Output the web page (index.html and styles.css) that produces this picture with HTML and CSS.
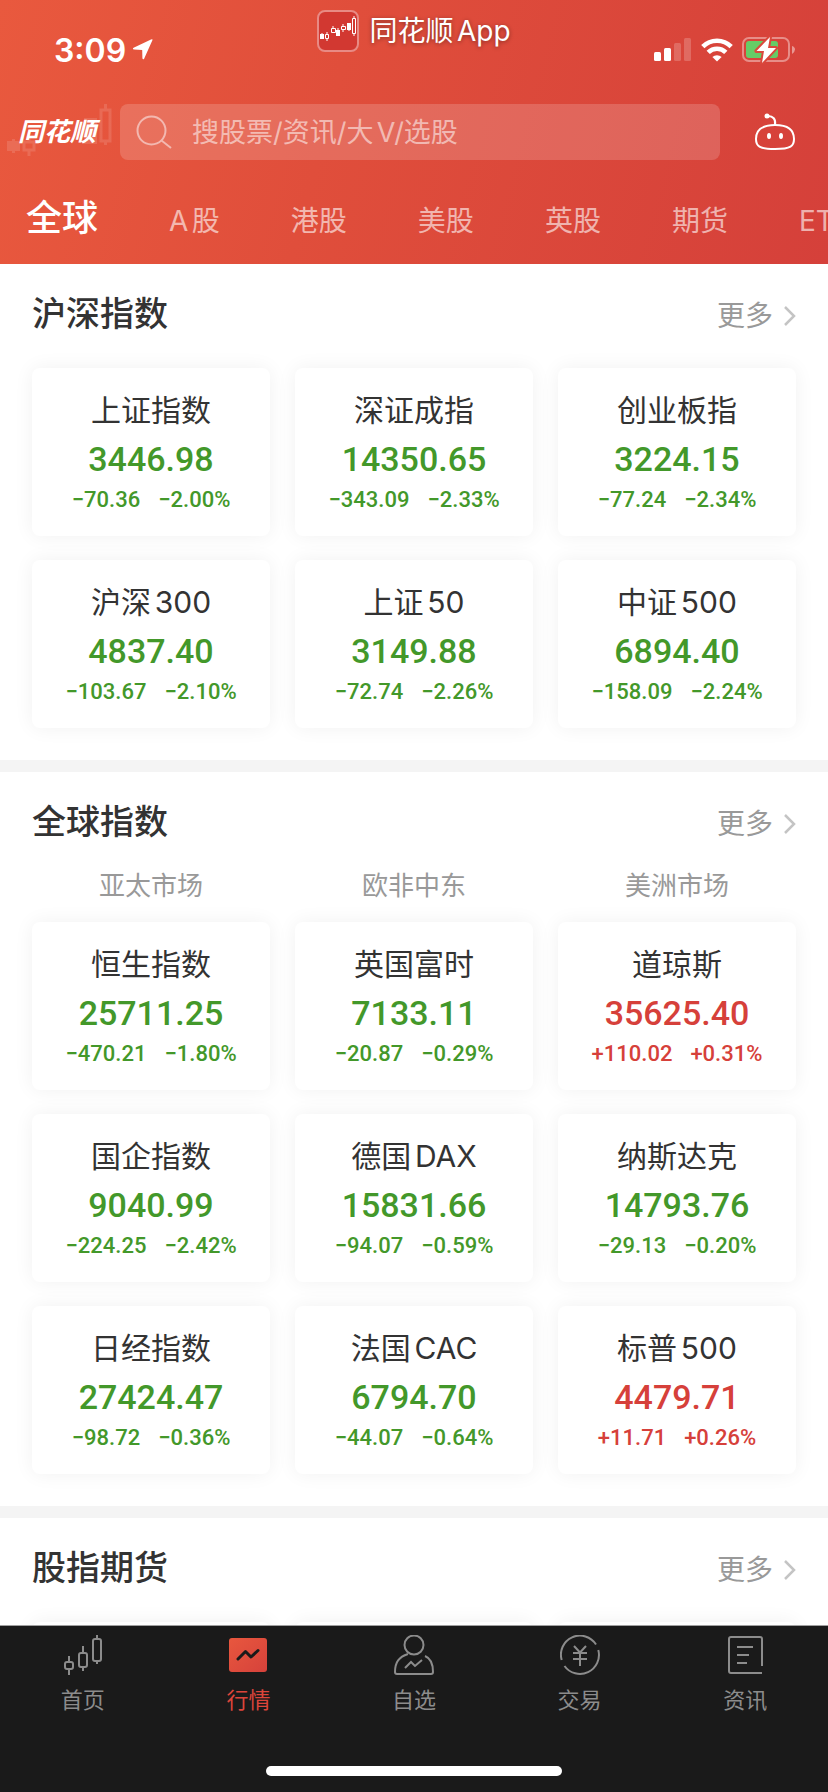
FILE: index.html
```html
<!DOCTYPE html>
<html lang="zh-CN">
  <head>
    <meta charset="utf-8">
    <meta name="viewport" content="width=device-width, initial-scale=1">
    <title>同花顺 - 行情</title>
    <link rel="stylesheet" href="styles.css">
  </head>

  <body>
    <header class="header">
      <div class="status-bar">
        <div class="status-time">
          3:09
          <svg width="22" height="22" viewBox="0 0 22 22"><path d="M20.5 1 L12 20 Q10.6 21 10.4 19 L10.2 11 L2 10.6 Q0 10 1.6 8.8 L19 0.4 Q21 0 20.5 1Z" fill="#fff"/></svg>
        </div>
        <div class="status-icons">
          <svg width="38" height="24" viewBox="0 0 38 24" fill="#fff">
            <rect x="0" y="14" width="7" height="9" rx="1.5"/>
            <rect x="10" y="10" width="7" height="13" rx="1.5"/>
            <rect x="20" y="5" width="7" height="18" rx="1.5" opacity=".2"/>
            <rect x="30" y="0" width="7" height="23" rx="1.5" opacity=".2"/>
          </svg>
          <svg width="32" height="24" viewBox="0 0 32 24" fill="none" stroke="#fff" stroke-width="4.6">
            <path d="M1.8 8.6 A20 20 0 0 1 30.2 8.6"/>
            <path d="M7.2 14.4 A12.4 12.4 0 0 1 24.8 14.4"/>
            <path d="M16 23.6 L11.4 19 A6.6 6.6 0 0 1 20.6 19Z" fill="#fff" stroke="none"/>
          </svg>
          <svg width="54" height="28" viewBox="0 0 54 28">
            <rect x="1" y="2" width="46" height="23" rx="6" fill="none" stroke="#fff" stroke-width="2" opacity=".4"/>
            <rect x="4" y="5" width="32" height="17" rx="3" fill="#66cc66"/>
            <path d="M50 10 Q53 11 53 13.5 Q53 16 50 18Z" fill="#fff" opacity=".45"/>
            <path d="M28 1 L14.5 15 H22 L20 27 L34 12 H26Z" fill="#fff" stroke="#da483c" stroke-width="4" stroke-linejoin="round"/>
            <path d="M28 1 L14.5 15 H22 L20 27 L34 12 H26Z" fill="#fff"/>
          </svg>
        </div>
        <div class="app-banner">
          <svg width="42" height="42" viewBox="0 0 42 42">
            <rect x="1" y="1" width="40" height="40" rx="7" fill="#d23831" stroke="#e88a84" stroke-width="2"/>
            <g fill="#fff" stroke="#fff">
              <path d="M3 24h4v5H3zM19 20h4v6h-4zM30 13h4v7h-4zM4.500 23h1v1h-1zM20.500 18h1v2h-1zM31.500 20h1v1h-1z" stroke="none"/>
              <path d="M10 22v2M10 29v2M16 16v2M26 14v2M26 20v2M37 6v2M37 24v2"/>
              <path d="M8.500 24.500h3v4h-3zM14.500 18.500h4v4h-4zM24.500 16.500h4v3h-4zM35.500 8.500h3v15h-3z" fill="none"/>
            </g>
          </svg>
          <span>同花顺App</span>
        </div>
      </div>

      <div class="search-row">
        <a class="logo" href="#">
          <svg class="logo-bars" width="112" height="56" viewBox="0 0 112 56">
            <path d="M7 37h13v10H7zM12 35h3v14h-3zM84 14h13v26H84z" fill="#fff"/>
            <path d="M24 38h10v8H24zM29 33v5M29 46v6M101 6h9v31h-9zM105.500 0v6M105.500 37v4" fill="none" stroke="#fff" stroke-width="3"/>
          </svg>
          <span>同花顺</span>
        </a>
        <div class="search-box">
          <svg width="36" height="34" viewBox="0 0 36 34" fill="none" stroke="#f3b8b0" stroke-width="2">
            <circle cx="15.500" cy="15.500" r="14"/>
            <path d="M25.500 25.500 L35 33"/>
          </svg>
          <input type="text" aria-label="搜索" placeholder="搜股票/资讯/大V/选股">
        </div>
        <button class="robot" aria-label="智能助手">
          <svg width="42" height="38" viewBox="0 0 42 38" fill="none" stroke="#fff" stroke-width="2">
            <path d="M21 12 C8 12 2 17 2 26 C2 33 5 36 21 36 C37 36 40 33 40 26 C40 17 34 12 21 12Z"/>
            <path d="M21 12 C22 6 19 3 14 3"/>
            <circle cx="13" cy="3" r="2.500" fill="#fff" stroke="none"/>
            <ellipse cx="15" cy="23" rx="2" ry="3" fill="#fff" stroke="none"/>
            <ellipse cx="27" cy="23" rx="2" ry="3" fill="#fff" stroke="none"/>
          </svg>
        </button>
      </div>

      <nav class="market-tabs">
        <a class="active" href="#">全球</a>
        <a href="#">A股</a>
        <a href="#">港股</a>
        <a href="#">美股</a>
        <a href="#">英股</a>
        <a href="#">期货</a>
        <a href="#">ETF</a>
      </nav>
    </header>

    <main class="content">
      <section class="section">
        <div class="section-head">
          <h2>沪深指数</h2>
          <a class="more" href="#">更多 <svg width="13" height="20" viewBox="0 0 13 20"><path d="M2 1 L11 10 L2 19" fill="none" stroke="#c4c4c4" stroke-width="2.500"/></svg></a>
        </div>
        <div class="cards">
          <div class="card down">
            <div class="name">上证指数</div>
            <div class="value">3446.98</div>
            <div class="change"><span>−70.36</span><span>−2.00%</span></div>
          </div>
          <div class="card down">
            <div class="name">深证成指</div>
            <div class="value">14350.65</div>
            <div class="change"><span>−343.09</span><span>−2.33%</span></div>
          </div>
          <div class="card down">
            <div class="name">创业板指</div>
            <div class="value">3224.15</div>
            <div class="change"><span>−77.24</span><span>−2.34%</span></div>
          </div>
          <div class="card down">
            <div class="name">沪深300</div>
            <div class="value">4837.40</div>
            <div class="change"><span>−103.67</span><span>−2.10%</span></div>
          </div>
          <div class="card down">
            <div class="name">上证50</div>
            <div class="value">3149.88</div>
            <div class="change"><span>−72.74</span><span>−2.26%</span></div>
          </div>
          <div class="card down">
            <div class="name">中证500</div>
            <div class="value">6894.40</div>
            <div class="change"><span>−158.09</span><span>−2.24%</span></div>
          </div>
        </div>
      </section>

      <section class="section">
        <div class="section-head">
          <h2>全球指数</h2>
          <a class="more" href="#">更多 <svg width="13" height="20" viewBox="0 0 13 20"><path d="M2 1 L11 10 L2 19" fill="none" stroke="#c4c4c4" stroke-width="2.500"/></svg></a>
        </div>
        <div class="regions">
          <div>亚太市场</div>
          <div>欧非中东</div>
          <div>美洲市场</div>
        </div>
        <div class="cards">
          <div class="card down">
            <div class="name">恒生指数</div>
            <div class="value">25711.25</div>
            <div class="change"><span>−470.21</span><span>−1.80%</span></div>
          </div>
          <div class="card down">
            <div class="name">英国富时</div>
            <div class="value">7133.11</div>
            <div class="change"><span>−20.87</span><span>−0.29%</span></div>
          </div>
          <div class="card up">
            <div class="name">道琼斯</div>
            <div class="value">35625.40</div>
            <div class="change"><span>+110.02</span><span>+0.31%</span></div>
          </div>
          <div class="card down">
            <div class="name">国企指数</div>
            <div class="value">9040.99</div>
            <div class="change"><span>−224.25</span><span>−2.42%</span></div>
          </div>
          <div class="card down">
            <div class="name">德国DAX</div>
            <div class="value">15831.66</div>
            <div class="change"><span>−94.07</span><span>−0.59%</span></div>
          </div>
          <div class="card down">
            <div class="name">纳斯达克</div>
            <div class="value">14793.76</div>
            <div class="change"><span>−29.13</span><span>−0.20%</span></div>
          </div>
          <div class="card down">
            <div class="name">日经指数</div>
            <div class="value">27424.47</div>
            <div class="change"><span>−98.72</span><span>−0.36%</span></div>
          </div>
          <div class="card down">
            <div class="name">法国CAC</div>
            <div class="value">6794.70</div>
            <div class="change"><span>−44.07</span><span>−0.64%</span></div>
          </div>
          <div class="card up">
            <div class="name">标普500</div>
            <div class="value">4479.71</div>
            <div class="change"><span>+11.71</span><span>+0.26%</span></div>
          </div>
        </div>
      </section>

      <section class="section">
        <div class="section-head">
          <h2>股指期货</h2>
          <a class="more" href="#">更多 <svg width="13" height="20" viewBox="0 0 13 20"><path d="M2 1 L11 10 L2 19" fill="none" stroke="#c4c4c4" stroke-width="2.500"/></svg></a>
        </div>
        <div class="cards">
          <div class="card"></div>
          <div class="card"></div>
          <div class="card"></div>
        </div>
      </section>
    </main>

    <footer class="footer">
      <nav class="tab-bar">
        <a href="#">
          <svg width="40" height="40" viewBox="0 0 40 40" fill="none" stroke="#8c8c8c" stroke-width="2">
            <rect x="2" y="27" width="8" height="7" rx="2"/><path d="M6 21v6M6 34v6"/>
            <rect x="16" y="18" width="8" height="14" rx="2"/><path d="M20 11v7M20 32v4"/>
            <rect x="30" y="4" width="8" height="22" rx="2"/><path d="M34 0v4M34 26v3"/>
          </svg>
          <span>首页</span>
        </a>
        <a class="active" href="#">
          <svg width="40" height="40" viewBox="0 0 40 40">
            <defs><linearGradient id="red" x1="0" y1="0" x2="1" y2="1"><stop offset="0" stop-color="#e8573e"/><stop offset="1" stop-color="#d6423b"/></linearGradient></defs>
            <rect x="1" y="3" width="38" height="34" rx="3" fill="url(#red)"/>
            <path d="M10 24 L17.500 16.500 L23 22 L30 15.500" fill="none" stroke="#1a1a1a" stroke-width="3" stroke-linecap="round" stroke-linejoin="round"/>
          </svg>
          <span>行情</span>
        </a>
        <a href="#">
          <svg width="40" height="40" viewBox="0 0 40 40" fill="none" stroke="#8c8c8c" stroke-width="2">
            <circle cx="20" cy="10" r="9.500"/>
            <path d="M14 19 C5 22 1 27 1 37 Q1 39 3 39 H37 Q39 39 39 37 C39 29 36 23 31 21"/>
            <path d="M11 33 L17 27 L21 31 L28 25"/>
          </svg>
          <span>自选</span>
        </a>
        <a href="#">
          <svg width="40" height="40" viewBox="0 0 40 40" fill="none" stroke="#8c8c8c" stroke-width="2">
            <path d="M1.700 25 A19 19 0 0 1 36 9.500M38.300 15 A19 19 0 0 1 4.500 31"/>
            <path d="M14 11 L20 17.500 L26 11M13 18h14M13 24h14M20 18v13"/>
          </svg>
          <span>交易</span>
        </a>
        <a href="#">
          <svg width="40" height="40" viewBox="0 0 40 40" fill="none" stroke="#8c8c8c" stroke-width="2">
            <path d="M37 38 H6 Q4 38 4 36 V4 Q4 2 6 2 H35 Q37 2 37 4 V31"/>
            <path d="M12 12h16M12 20h12M12 28h10"/>
          </svg>
          <span>资讯</span>
        </a>
      </nav>
      <div class="home-indicator"></div>
    </footer>
  </body>
</html>
```
FILE: styles.css
```css
* {
  box-sizing: border-box;
}
body {
  display: flex;
  flex-direction: column;
  height: 100vh;
  margin: 0;
  background-color: #ffffff;
  color: #333333;
  font-family: Inter, 'Noto Sans CJK SC', sans-serif;
  text-autospace: normal;
}
a {
  color: inherit;
  text-decoration: none;
}
svg {
  display: block;
  flex: none;
}

/* header */
.header {
  flex: none;
  background: linear-gradient(105deg, #e9593e 0%, #e04e3b 40%, #d5403a 100%);
  color: #ffffff;
}
.status-bar {
  position: relative;
  display: flex;
  justify-content: space-between;
  align-items: center;
  height: 104px;
  padding: 0 32px 4px 54px;
}
.status-time {
  display: flex;
  align-items: center;
  gap: 6px;
  font-size: 32px;
  font-weight: 600;
}
.status-icons {
  display: flex;
  align-items: center;
  gap: 9px;
}
.app-banner {
  position: absolute;
  top: 10px;
  left: 0;
  right: 0;
  display: flex;
  justify-content: center;
  align-items: center;
  gap: 10px;
  font-size: 28px;
  line-height: 42px;
  text-shadow: 0 1px 4px rgba(0, 0, 0, 0.4);
}
.search-row {
  display: flex;
  align-items: center;
  padding-right: 32px;
}
.logo {
  position: relative;
  width: 120px;
  padding-left: 18px;
  font-size: 26px;
  font-weight: 700;
  font-style: italic;
  line-height: 56px;
}
.logo-bars {
  position: absolute;
  top: 0;
  left: 0;
  opacity: 0.12;
}
.search-box {
  flex: 1;
  display: flex;
  align-items: center;
  gap: 20px;
  height: 56px;
  padding-left: 16px;
  background-color: rgba(255, 255, 255, 0.17);
  border-radius: 8px;
}
.search-box input {
  flex: 1;
  min-width: 0;
  padding: 0;
  border: none;
  outline: none;
  background: none;
  color: #ffffff;
  font-family: inherit;
  font-size: 27px;
}
.search-box input::placeholder {
  color: rgba(255, 255, 255, 0.55);
}
.robot {
  margin-left: 34px;
  padding: 0;
  border: none;
  background: none;
  cursor: pointer;
}
.market-tabs {
  display: flex;
  align-items: baseline;
  gap: 71px;
  height: 104px;
  padding: 30px 0 0 26px;
  overflow: hidden;
  color: rgba(255, 255, 255, 0.6);
  font-size: 28px;
  line-height: 56px;
  white-space: nowrap;
}
.market-tabs .active {
  color: #ffffff;
  font-size: 36px;
  font-weight: 500;
}

/* index cards */
.content {
  flex: 1;
  min-height: 0;
  overflow: hidden;
}
.section {
  padding: 26px 32px 32px;
  border-bottom: 12px solid #f4f4f4;
}
.section-head {
  display: flex;
  justify-content: space-between;
  align-items: baseline;
  height: 48px;
  line-height: 48px;
}
.section-head h2 {
  margin: 0;
  font-size: 34px;
  font-weight: 500;
}
.more {
  display: flex;
  align-items: center;
  gap: 10px;
  color: #999999;
  font-size: 28px;
}
.regions,
.cards {
  display: grid;
  grid-template-columns: repeat(3, 1fr);
  column-gap: 25px;
  text-align: center;
}
.regions {
  margin: 22px 0 -12px;
  color: #999999;
  font-size: 26px;
  line-height: 36px;
}
.cards {
  row-gap: 24px;
  margin-top: 30px;
}
.card {
  min-height: 168px;
  padding: 22px 0 24px;
  background-color: #ffffff;
  border-radius: 8px;
  box-shadow: 0 0 20px rgba(0, 0, 0, 0.06);
}
.name {
  font-size: 30px;
  line-height: 40px;
}
.value {
  font-family: Roboto, sans-serif;
  font-size: 34px;
  font-weight: 500;
  line-height: 58px;
}
.change {
  display: flex;
  justify-content: center;
  gap: 18px;
  font-family: Roboto, sans-serif;
  font-size: 22px;
  font-weight: 500;
  line-height: 24px;
}
.down .value,
.down .change {
  color: #43982a;
}
.up .value,
.up .change {
  color: #d6403a;
}

/* bottom tab bar */
.footer {
  flex: none;
  padding-bottom: 16px;
  border-top: 1px solid #a0a0a0;
  background-color: #1a1a1a;
}
.tab-bar {
  display: flex;
  height: 140px;
  padding-top: 9px;
  color: #8c8c8c;
  font-size: 22px;
  line-height: 30px;
}
.tab-bar a {
  flex: 1;
  display: flex;
  flex-direction: column;
  align-items: center;
  gap: 10px;
}
.tab-bar .active {
  color: #dc453b;
}
.home-indicator {
  width: 296px;
  height: 10px;
  margin: 0 auto;
  background-color: #ffffff;
  border-radius: 5px;
}
```
